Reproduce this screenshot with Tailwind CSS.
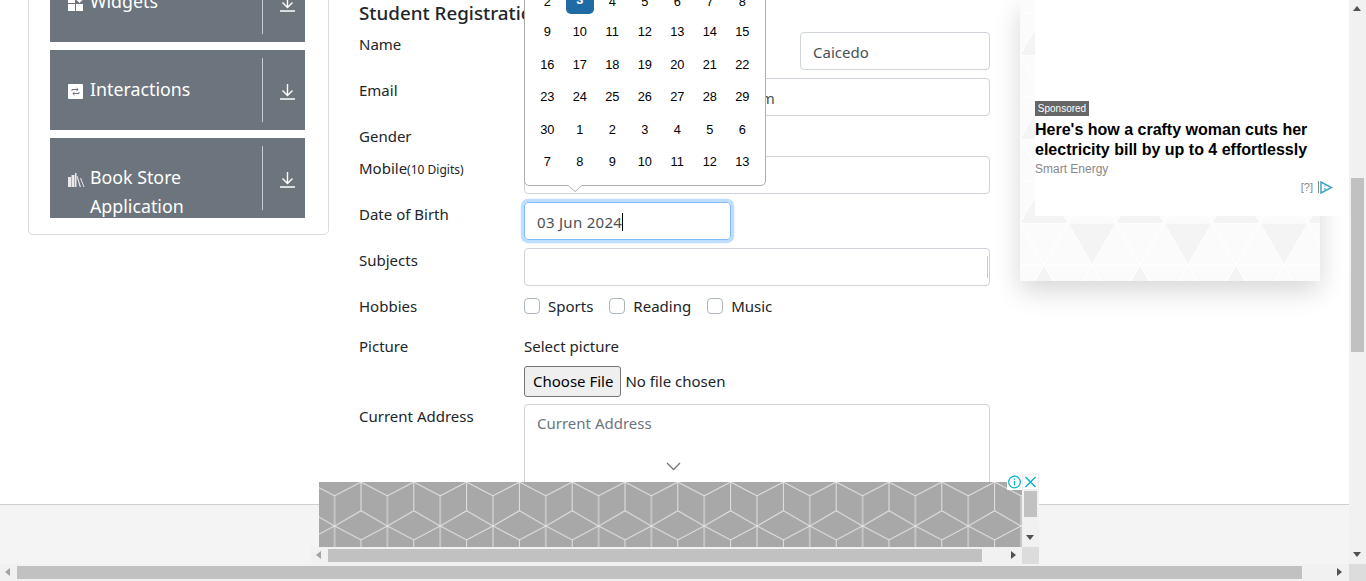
<!DOCTYPE html>
<html lang="en">
<head>
  <meta charset="UTF-8">
  <title>Student Registration Form</title>
  <script src="https://cdn.jsdelivr.net/npm/@tailwindcss/browser@4"></script>
</head>
<body class="overflow-hidden bg-white font-['Noto_Sans',sans-serif] text-[15px] leading-6 text-[#212529]">
<div class="relative grid h-[581px] w-[1366px] grid-cols-[1349px_17px] grid-rows-[564px_17px] overflow-hidden">

  <!-- page -->
  <div class="flex overflow-hidden">
    <!-- sidebar -->
    <aside class="mt-[-60px] ml-[28px] h-[295px] w-[301px] shrink-0 rounded-[5px] border border-[#dcdcdc] pt-[21px] pr-[23px] pl-[21px]">
      <div class="flex flex-col gap-2">
        <div class="flex h-20 overflow-hidden bg-[#6c757d] text-[17.8px] leading-[28.8px] text-white">
          <div class="flex w-[212px] gap-[7px] pt-[25px] pl-[18px]">
            <svg class="mt-[9px] h-[15px] w-[15px] shrink-0" viewBox="0 0 15 15" fill="#fff"><rect x="0" y="8" width="7" height="7"/><rect x="8" y="8" width="7" height="7"/><rect x="0" y="0" width="7" height="7"/><path d="M11.5 0 15 3.5 11.5 7 8 3.5z"/></svg>
            <span>Widgets</span>
          </div>
          <div class="my-2 w-px bg-[#c9cdd1]"></div>
          <div class="flex flex-1 items-center justify-center pt-[4px] pl-[7px]">
            <svg class="h-4 w-[15px]" viewBox="0 0 15 16" fill="none" stroke="#fff" stroke-width="1.4"><path d="M7.500 0v11M2.500 6.500 7.500 11.500 12.500 6.500M0 15h15"/></svg>
          </div>
        </div>
        <div class="flex h-20 overflow-hidden bg-[#6c757d] text-[17.8px] leading-[28.8px] text-white">
          <div class="flex w-[212px] gap-[7px] pt-[25px] pl-[18px]">
            <svg class="mt-[9px] h-[15px] w-[15px] shrink-0" viewBox="0 0 15 15"><rect width="15" height="15" rx="1" fill="#fff"/><path d="M4 7V5.500h6M8.500 4l1.700 1.500L8.500 7M11 8v1.500H5M6.500 8 4.800 9.500 6.500 11" fill="none" stroke="#6c757d" stroke-width="1"/></svg>
            <span>Interactions</span>
          </div>
          <div class="my-2 w-px bg-[#c9cdd1]"></div>
          <div class="flex flex-1 items-center justify-center pt-[4px] pl-[7px]">
            <svg class="h-4 w-[15px]" viewBox="0 0 15 16" fill="none" stroke="#fff" stroke-width="1.4"><path d="M7.500 0v11M2.500 6.500 7.500 11.500 12.500 6.500M0 15h15"/></svg>
          </div>
        </div>
        <div class="flex h-20 overflow-hidden bg-[#6c757d] text-[17.8px] leading-[28.8px] text-white">
          <div class="flex w-[212px] gap-[5px] pt-[25px] pl-[17px]">
            <svg class="mt-[9px] h-[16px] w-[18px] shrink-0" viewBox="0 0 18 16" fill="#e9e9e9"><path d="M1 5h3v10H1zM4.500 3h3v12h-3zM8 1h1.500v14H8z"/><path d="M10.500 4 14 15h-1.300L9.500 4zM14 6l3.500 9h-1L13 6z"/></svg>
            <span class="w-[150px]">Book Store Application</span>
          </div>
          <div class="my-2 w-px bg-[#c9cdd1]"></div>
          <div class="flex flex-1 items-center justify-center pt-[4px] pl-[7px]">
            <svg class="h-4 w-[15px]" viewBox="0 0 15 16" fill="none" stroke="#fff" stroke-width="1.4"><path d="M7.500 0v11M2.500 6.500 7.500 11.500 12.500 6.500M0 15h15"/></svg>
          </div>
        </div>
      </div>
    </aside>

    <!-- form -->
    <main class="ml-[30px] w-[631px] shrink-0">
      <h5 class="h-8 pt-px text-[18.8px] leading-6 font-medium">Student Registration Form</h5>
      <div class="flex h-[46px]">
        <label class="w-[165px]">Name</label>
        <div class="flex w-[466px] justify-between">
          <input class="h-[38px] w-[190px] rounded border border-[#ced4da] px-3 pt-[2px] text-[#495057]" value="">
          <input class="h-[38px] w-[190px] rounded border border-[#ced4da] px-3 pt-[2px] text-[#495057]" value="Caicedo">
        </div>
      </div>
      <div class="flex h-[46px]">
        <label class="w-[165px]">Email</label>
        <input class="h-[38px] w-[466px] rounded border border-[#ced4da] px-3 pt-[2px] text-[#495057]" value="mohamed.caicedo@example.com">
      </div>
      <div class="flex h-8"><label class="w-[165px]">Gender</label></div>
      <div class="flex h-[46px]">
        <label class="w-[165px]">Mobile<small class="text-[12px]">(10 Digits)</small></label>
        <input class="h-[38px] w-[466px] rounded border border-[#ced4da] px-3 text-[#495057]">
      </div>
      <div class="flex h-[46px]">
        <label class="w-[165px]">Date of Birth</label>
        <div class="flex h-[38px] w-[207px] items-center rounded border border-[#80bdff] px-3 pt-px tracking-[0.3px] text-[#495057] shadow-[0_0_0_3.2px_rgba(0,123,255,0.25)]">03 Jun 2024<span class="h-[18px] w-px bg-black"></span></div>
      </div>
      <div class="flex h-[46px]">
        <label class="w-[165px]">Subjects</label>
        <div class="flex h-[38px] w-[466px] items-center justify-end rounded border border-[#ced4da] pr-px"><span class="h-[22px] w-px bg-[#ccc]"></span></div>
      </div>
      <div class="flex h-10">
        <label class="w-[165px]">Hobbies</label>
        <div class="flex items-center gap-2 self-start">
          <span class="h-4 w-4 rounded border border-[#adb5bd]"></span><span class="mr-[8px]">Sports</span>
          <span class="h-4 w-4 rounded border border-[#adb5bd]"></span><span class="mr-[8px]">Reading</span>
          <span class="h-4 w-4 rounded border border-[#adb5bd]"></span><span>Music</span>
        </div>
      </div>
      <div class="flex h-[70px]">
        <label class="w-[165px]">Picture</label>
        <div>
          <div class="mb-2">Select picture</div>
          <input type="file" class="block h-[31px] w-[300px] font-['Noto_Sans',sans-serif] text-[15px] file:mr-[4px] file:h-[31px] file:rounded-[3px] file:border file:border-[#767676] file:bg-[#efefef] file:pr-[7px] file:pb-[2px] file:pl-[8px] file:text-black">
        </div>
      </div>
      <div class="flex">
        <label class="w-[165px]">Current Address</label>
        <textarea class="h-[112px] w-[466px] resize-none rounded border border-[#ced4da] px-3 py-[6px] placeholder:text-[#6c757d]" placeholder="Current Address"></textarea>
      </div>
    </main>

    <!-- ad column -->
    <div class="relative ml-[30px] h-[281px] w-[300px] shrink-0 bg-[#fbfbfb] shadow-[0_10px_25px_rgba(0,0,0,0.16)]">
      <svg class="absolute inset-0 h-full w-full" xmlns="http://www.w3.org/2000/svg">
        <defs><pattern id="tri" width="96" height="84" patternUnits="userSpaceOnUse" x="48" y="55"><path d="M0 0H48L24 42zM48 84 72 42 96 84z" fill="#f4f4f4"/><path d="M0 0 24 42 48 0 72 42 96 0M0 84 24 42 48 84 72 42 96 84M0 0H96M0 42H96" stroke="#fff" stroke-width="1" fill="none"/></pattern></defs>
        <rect width="100%" height="100%" fill="url(#tri)"/>
      </svg>
      <div class="absolute top-0 left-[15px] flex h-[216px] w-[314px] flex-col justify-end bg-white pr-[16px] pb-[21px] font-['Liberation_Sans',sans-serif]">
        <span class="mb-[4px] h-[15px] w-[54px] bg-[#666] text-center text-[10px] leading-[15px] text-white">Sponsored</span>
        <p class="text-[16px] leading-5 font-bold text-black">Here's how a crafty woman cuts her electricity bill by up to 4 effortlessly</p>
        <p class="mb-px text-[12px] leading-[18px] text-[#888]">Smart Energy</p>
        <div class="flex h-4 items-center justify-end gap-[5px] text-[11px] text-[#888]">[?]<span class="flex items-center gap-px"><span class="h-3 w-px bg-[#888]"></span>
          <svg class="h-[13px] w-[13px]" viewBox="0 0 13 13" fill="none" stroke="#3da6c4" stroke-width="1.500"><path d="M1 1v11l10.500-5.500z"/><path d="M5 4.500v1M5 7v2.500" stroke-width="1.200"/></svg></span>
        </div>
      </div>
    </div>
  </div>

  <!-- page vertical scrollbar -->
  <div class="relative bg-[#f1f1f1]">
    <span class="absolute top-[6px] left-[4px] h-0 w-0 border-x-[4.500px] border-b-[5px] border-x-transparent border-b-[#505050]"></span>
    <div class="absolute top-[178px] left-[2px] h-[174px] w-[13px] bg-[#c1c1c1]"></div>
    <span class="absolute top-[552px] left-[4px] h-0 w-0 border-x-[4.500px] border-t-[5px] border-x-transparent border-t-[#505050]"></span>
  </div>
  <!-- page horizontal scrollbar -->
  <div class="relative bg-[#f1f1f1]">
    <span class="absolute top-[4px] left-[5px] h-0 w-0 border-y-[4.500px] border-r-[5px] border-y-transparent border-r-[#a3a3a3]"></span>
    <div class="absolute top-[2px] left-[17px] h-[13px] w-[1285px] bg-[#c1c1c1]"></div>
    <span class="absolute top-[4px] left-[1337px] h-0 w-0 border-y-[4.500px] border-l-[5px] border-y-transparent border-l-[#505050]"></span>
  </div>
  <div class="bg-[#dcdcdc]"></div>

  <!-- fixed footer -->
  <div class="absolute top-[504px] left-0 h-[60px] w-[1349px] border-t border-[#cfcfcf] bg-[#f4f4f4]"></div>

  <!-- chevron from ad slot -->
  <svg class="absolute top-[462px] left-[666px] h-[9px] w-[15px]" viewBox="0 0 15 9" fill="none" stroke="#777" stroke-width="1.300"><path d="M1 1l6.500 6.500L14 1"/></svg>

  <!-- bottom ad -->
  <div class="absolute top-[474px] left-[311px] grid h-[90px] w-[728px] grid-cols-[711px_17px] grid-rows-[16px_57px_17px]">
    <div class="relative z-10 col-start-1 row-start-1 flex items-end justify-end">
      <svg class="h-4 w-[15px] bg-white" viewBox="0 0 15 16" fill="none" stroke="#00aecd" stroke-width="1.200"><circle cx="7.500" cy="8" r="5.800"/><path d="M7.500 7v4.500M7.500 4.500v1.300"/></svg>
    </div>
    <div class="col-start-2 row-start-1 border border-[#eee] bg-white">
      <svg class="h-full w-full" viewBox="0 0 15 14" fill="none" stroke="#00aecd" stroke-width="1.300"><path d="M2.500 2 12.500 12M12.500 2 2.500 12"/></svg>
    </div>
    <div class="col-start-1 row-start-2 row-end-3 mt-[-8px] ml-[8px] h-[65px] bg-[#a8a8a8]">
      <svg class="h-[65px] w-full" xmlns="http://www.w3.org/2000/svg">
        <defs><pattern id="cubes" width="52.800" height="65" patternUnits="userSpaceOnUse" x="15.600" y="0"><path d="M0 13.700 26.400 0 52.800 13.700M26.400 0V28.700L52.800 44 26.400 58 0 44 26.400 28.700M26.400 58V65M0 13.700V65M52.800 13.700V65" fill="none" stroke="#e2e2e2" stroke-width="1"/></pattern></defs>
        <rect width="100%" height="100%" fill="url(#cubes)"/>
      </svg>
    </div>
    <div class="relative col-start-2 row-start-2 bg-[#f1f1f1]">
      <div class="absolute top-px left-[2px] h-[26px] w-[13px] bg-[#c1c1c1]"></div>
      <span class="absolute top-[45px] left-[4px] h-0 w-0 border-x-[4.500px] border-t-[5px] border-x-transparent border-t-[#505050]"></span>
    </div>
    <div class="relative col-start-1 row-start-3 bg-[#f1f1f1]">
      <span class="absolute top-[4px] left-[5px] h-0 w-0 border-y-[4.500px] border-r-[5px] border-y-transparent border-r-[#a3a3a3]"></span>
      <div class="absolute top-[2px] left-[17px] h-[13px] w-[654px] bg-[#c1c1c1]"></div>
      <span class="absolute top-[4px] left-[700px] h-0 w-0 border-y-[4.500px] border-l-[5px] border-y-transparent border-l-[#505050]"></span>
    </div>
    <div class="col-start-2 row-start-3 bg-[#dcdcdc]"></div>
  </div>

  <!-- date picker popup -->
  <div class="absolute top-[-26px] left-[524px] h-[212px] w-[242px] rounded-[5px] border border-[#aeaeae] bg-white pt-[11px] pl-[6px] font-['Liberation_Sans',sans-serif] text-[12.8px] leading-[32.500px] text-black">
    <div class="grid h-[30px] grid-cols-[repeat(7,32.500px)] text-center">
      <span>2</span><span class="flex h-[28px] w-[28px] items-center justify-center justify-self-center rounded-[5px] bg-[#216ba5] font-bold text-white">3</span><span>4</span><span>5</span><span>6</span><span>7</span><span>8</span>
    </div>
    <div class="grid grid-cols-[repeat(7,32.500px)] text-center">
      <span>9</span><span>10</span><span>11</span><span>12</span><span>13</span><span>14</span><span>15</span>
      <span>16</span><span>17</span><span>18</span><span>19</span><span>20</span><span>21</span><span>22</span>
      <span>23</span><span>24</span><span>25</span><span>26</span><span>27</span><span>28</span><span>29</span>
      <span>30</span><span>1</span><span>2</span><span>3</span><span>4</span><span>5</span><span>6</span>
      <span>7</span><span>8</span><span>9</span><span>10</span><span>11</span><span>12</span><span>13</span>
    </div>
    <!-- arrow -->
    <span class="absolute bottom-[-7px] left-[42px] h-0 w-0 border-x-[8px] border-t-[7px] border-x-transparent border-t-[#aeaeae]"></span>
    <span class="absolute bottom-[-6px] left-[43px] h-0 w-0 border-x-[7px] border-t-[6px] border-x-transparent border-t-white"></span>
  </div>
</div>
</body>
</html>
